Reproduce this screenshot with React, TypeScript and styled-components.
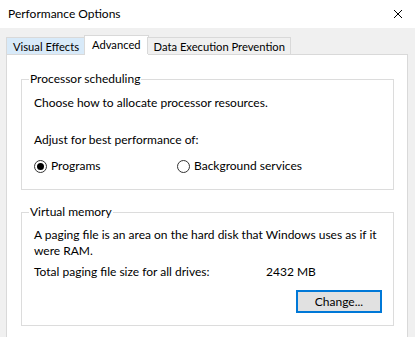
import styled, { createGlobalStyle } from 'styled-components'

const GlobalStyle = createGlobalStyle`
  html, body {
    margin: 0;
    padding: 0;
    background: #f0f0f0;
  }
  body {
    font-family: Lato, "Noto Sans", sans-serif;
    font-size: 12px;
    color: #000;
  }
`

interface TabProps {
    $active?: boolean
    $hover?: boolean
}

interface RadioProps {
    $checked?: boolean
}

function App() {
    return (
        <>
            <GlobalStyle />
            <Window>
                <TitleBar>
                    <span>Performance Options</span>
                    <CloseIcon viewBox="0 0 10 10">
                        <path d="M1 1 L9 9 M9 1 L1 9" stroke="#000" strokeWidth="1" fill="none" />
                    </CloseIcon>
                </TitleBar>
                <Body>
                    <TabStrip>
                        <Tab $hover>Visual Effects</Tab>
                        <Tab $active>Advanced</Tab>
                        <Tab>Data Execution Prevention</Tab>
                    </TabStrip>
                    <Panel>
                        <Group>
                            <Legend>Processor scheduling</Legend>
                            <Line>Choose how to allocate processor resources.</Line>
                            <Line style={{ marginTop: 21 }}>Adjust for best performance of:</Line>
                            <RadioRow>
                                <RadioItem>
                                    <RadioCircle $checked />
                                    Programs
                                </RadioItem>
                                <RadioItem>
                                    <RadioCircle />
                                    Background services
                                </RadioItem>
                            </RadioRow>
                        </Group>
                        <Group $memory>
                            <Legend>Virtual memory</Legend>
                            <Line>A paging file is an area on the hard disk that Windows uses as if it<br />were RAM.</Line>
                            <SizeRow>
                                <span>Total paging file size for all drives:</span>
                                <span>2432 MB</span>
                            </SizeRow>
                            <ButtonRow>
                                <Button>Change...</Button>
                            </ButtonRow>
                        </Group>
                    </Panel>
                </Body>
            </Window>
        </>
    )
}

const Window = styled.div`
  width: 415px;
  height: 337px;
  overflow: hidden;
  display: flex;
  flex-direction: column;
  background: #f0f0f0;
`

const TitleBar = styled.div`
  height: 28px;
  flex-shrink: 0;
  background: #fff;
  display: flex;
  align-items: center;
  justify-content: space-between;
  padding: 0 12px 2px 8px;
  box-sizing: border-box;
  font-size: 12px;
`

const CloseIcon = styled.svg`
  width: 10px;
  height: 10px;
  margin-top: 1px;
`

const Body = styled.div`
  padding: 7px 7px 0 6px;
  display: flex;
  flex-direction: column;
`

const TabStrip = styled.div`
  display: flex;
  align-items: flex-end;
  height: 20px;
  margin-bottom: -1px;
  position: relative;
  z-index: 1;
`

const Tab = styled.div<TabProps>`
  box-sizing: border-box;
  height: ${({ $active }) => $active ? '20px' : '17px'};
  margin-bottom: ${({ $active }) => $active ? '0' : '1px'};
  padding: ${({ $active }) => $active ? '0 7px 2px 7px' : '0 5px 0 6px'};
  margin-right: ${({ $active }) => $active ? '-1px' : '0'};
  border: 1px solid #d9d9d9;
  border-bottom: none;
  background: ${({ $active, $hover }) => $active ? '#fff' : $hover ? '#d8eaf9' : '#f0f0f0'};
  font-size: 11.2px;
  display: flex;
  align-items: center;
  white-space: nowrap;
  & + & {
    margin-left: -1px;
  }
`

const Panel = styled.div`
  background: #fff;
  border: 1px solid #d9d9d9;
  padding: 16px 13px 40px 14px;
  display: flex;
  flex-direction: column;
  gap: 14px;
`

const Group = styled.fieldset<{ $memory?: boolean }>`
  margin: 0;
  border: 1px solid #dcdcdc;
  padding: ${({ $memory }) => $memory ? '7px 12px 12px 12px' : '8px 12px 15px 12px'};
  min-width: 0;
`

const Legend = styled.legend`
  padding: 0 1px;
  margin-left: -5px;
  line-height: 16px;
`

const Line = styled.div`
  line-height: 16px;
  white-space: nowrap;
`

const RadioRow = styled.div`
  display: flex;
  margin-top: 10px;
  line-height: 16px;
`

const RadioItem = styled.label`
  display: flex;
  align-items: center;
  gap: 4px;
  &:first-child {
    width: 143px;
  }
`

const RadioCircle = styled.span<RadioProps>`
  box-sizing: border-box;
  width: 13px;
  height: 13px;
  border-radius: 50%;
  border: 1px solid #333;
  display: grid;
  place-items: center;
  &::after {
    content: '';
    width: 7px;
    height: 7px;
    border-radius: 50%;
    background: #000;
    display: ${({ $checked }) => $checked ? 'block' : 'none'};
  }
`

const SizeRow = styled.div`
  display: flex;
  margin-top: 5px;
  line-height: 16px;
  & > span:first-child {
    width: 232px;
  }
`

const ButtonRow = styled.div`
  display: flex;
  justify-content: flex-end;
  margin-top: 10px;
  margin-right: -1px;
`

const Button = styled.button`
  box-sizing: border-box;
  width: 86px;
  height: 23px;
  border: 2px solid #0078d7;
  background: #e1e1e1;
  font-family: inherit;
  font-size: 12px;
  color: #000;
  padding: 0;
`

export default App
